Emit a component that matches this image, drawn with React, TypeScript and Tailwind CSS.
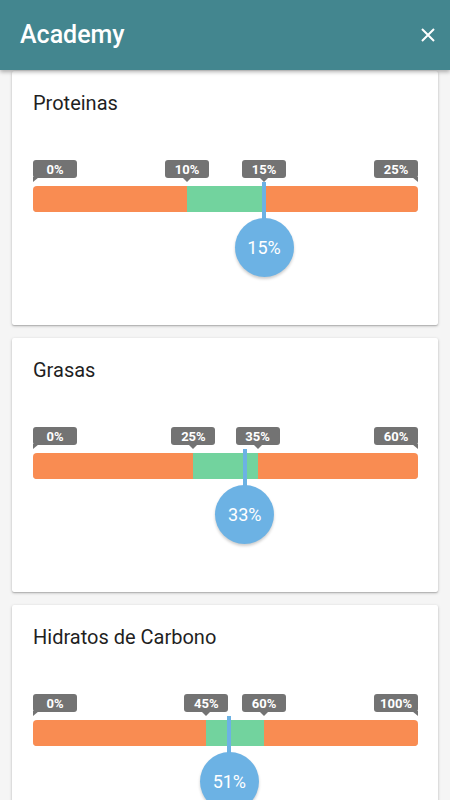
import React from "react";

type Range = {
  title: string;
  min: number;
  max: number;
  low: number;
  high: number;
  value: number;
};

const data: Range[] = [
  { title: "Proteinas", min: 0, max: 25, low: 10, high: 15, value: 15 },
  { title: "Grasas", min: 0, max: 60, low: 25, high: 35, value: 33 },
  { title: "Hidratos de Carbono", min: 0, max: 100, low: 45, high: 60, value: 51 },
];

const font = { fontFamily: "Roboto, 'Noto Sans', Arial, sans-serif" };

function Tag({ text, pos, kind }: { text: string; pos: number; kind: "left" | "center" | "right" }) {
  const style: React.CSSProperties =
    kind === "left"
      ? { left: 0 }
      : kind === "right"
      ? { right: 0 }
      : { left: `calc(${pos}% - 22px)` };
  return (
    <div className="absolute top-0 h-[18px] w-[44px]" style={style}>
      <div className="flex h-[18px] w-[44px] items-center justify-center rounded-[3px] bg-[#737373] text-[13px] font-bold leading-none text-white">
        {text}
      </div>
      {kind === "left" && (
        <div className="absolute left-0 top-[17px] h-0 w-0 border-r-[6px] border-t-[5px] border-r-transparent border-t-[#737373]" />
      )}
      {kind === "right" && (
        <div className="absolute right-0 top-[17px] h-0 w-0 border-l-[6px] border-t-[5px] border-l-transparent border-t-[#737373]" />
      )}
      {kind === "center" && (
        <div className="absolute left-[17px] top-[17px] h-0 w-0 border-x-[5px] border-t-[5px] border-x-transparent border-t-[#737373]" />
      )}
    </div>
  );
}

function Card({ r }: { r: Range }) {
  const span = r.max - r.min;
  const lowP = ((r.low - r.min) / span) * 100;
  const highP = ((r.high - r.min) / span) * 100;
  const valP = ((r.value - r.min) / span) * 100;
  return (
    <div className="h-[254px] shrink-0 rounded-[2px] bg-white pl-[21px] pr-[20px] pt-[21px] shadow-[0_1px_3px_rgba(0,0,0,0.25),0_1px_1px_rgba(0,0,0,0.12)]">
      <div className="text-[20px] leading-[23px] text-[#1f1f1f]">{r.title}</div>
      <div className="relative mt-[45px] h-[120px]">
        <Tag text={`${r.min}%`} pos={0} kind="left" />
        <Tag text={`${r.low}%`} pos={lowP} kind="center" />
        <Tag text={`${r.high}%`} pos={highP} kind="center" />
        <Tag text={`${r.max}%`} pos={100} kind="right" />
        <div className="absolute left-0 right-0 top-[26px] flex h-[26px] overflow-hidden rounded-[4px] shadow-[inset_0_-1px_0_rgba(200,80,20,0.6)]">
          <div className="h-full bg-[#f98c52]" style={{ width: `${lowP}%` }} />
          <div className="h-full bg-[#72d39e]" style={{ width: `${highP - lowP}%` }} />
          <div className="h-full flex-1 bg-[#f98c52]" />
        </div>
        <div
          className="absolute top-[22px] h-[40px] w-[4px] bg-[#6cb2e4]"
          style={{ left: `calc(${valP}% - 2px)` }}
        />
        <div
          className="absolute top-[58px] flex h-[59px] w-[59px] items-center justify-center rounded-full bg-[#6cb2e4] text-[18px] text-white shadow-[0_2px_3px_rgba(0,0,0,0.2)]"
          style={{ left: `calc(${valP}% - 29.5px)` }}
        >
          {r.value}%
        </div>
      </div>
    </div>
  );
}

export default function App() {
  return (
    <div className="flex h-[800px] w-[450px] flex-col overflow-hidden bg-[#f5f5f5]" style={font}>
      <div className="relative z-10 flex h-[70px] shrink-0 items-center justify-between bg-[#43868f] pl-[20px] pr-[10px] shadow-[0_2px_4px_rgba(0,0,0,0.3)]">
        <div className="text-[25px] font-medium text-white">Academy</div>
        <svg width="24" height="24" viewBox="0 0 24 24" className="text-white">
          <path d="M6 6 L18 18 M18 6 L6 18" stroke="currentColor" strokeWidth="2" fill="none" />
        </svg>
      </div>
      <div className="flex flex-col gap-[13px] px-[12px] pt-px">
        {data.map((r) => (
          <Card key={r.title} r={r} />
        ))}
      </div>
    </div>
  );
}
